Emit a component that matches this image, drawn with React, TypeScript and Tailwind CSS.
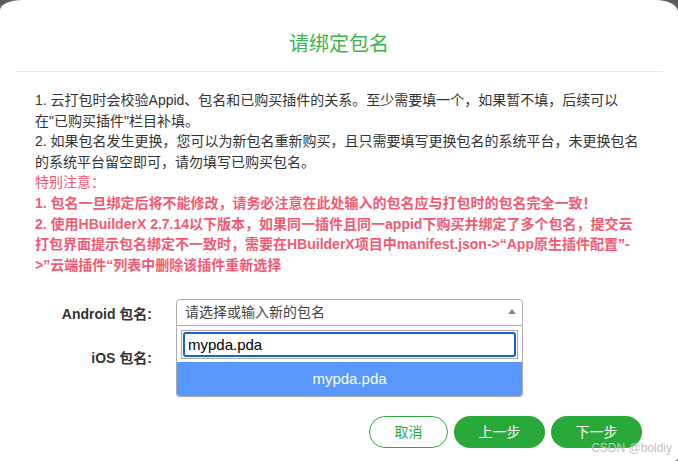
export default function App() {
  const font = "font-['Liberation_Sans','Noto_Sans_CJK_SC',sans-serif]";

  return (
    <div className={`relative h-[461px] w-[678px] overflow-hidden bg-[#5c5c5c] ${font}`}>
      <div className="flex h-full flex-col rounded-tl-[22px_10px] rounded-tr-[22px_12px] rounded-br-[4px] bg-white">
        {/* header */}
        <div className="mx-[15px] flex h-[72px] shrink-0 items-end justify-center border-b border-[#e8e8e8] pb-[14px]">
          <h1 className="text-[20px] leading-[26px] text-[#39b54a]">请绑定包名</h1>
        </div>

        {/* notice */}
        <div className="mt-[18px] pl-[35px] text-[14px] leading-[20.6px] text-[#333]">
          <p className="whitespace-nowrap">
            1. 云打包时会校验Appid、包名和已购买插件的关系。至少需要填一个，如果暂不填，后续可以
            <br />
            在"已购买插件"栏目补填。
          </p>
          <p className="whitespace-nowrap">
            2. 如果包名发生更换，您可以为新包名重新购买，且只需要填写更换包名的系统平台，未更换包名
            <br />
            的系统平台留空即可，请勿填写已购买包名。
          </p>
          <p className="text-[#f35a72]">特别注意：</p>
          <p className="whitespace-nowrap font-bold text-[#f35a72]">
            1. 包名一旦绑定后将不能修改，请务必注意在此处输入的包名应与打包时的包名完全一致！
          </p>
          <p className="whitespace-nowrap font-bold text-[#f35a72]">
            2. 使用HBuilderX 2.7.14以下版本，如果同一插件且同一appid下购买并绑定了多个包名，提交云
            <br />
            打包界面提示包名绑定不一致时，需要在HBuilderX项目中manifest.json-&gt;“App原生插件配置”-
            <br />
            &gt;”云端插件“列表中删除该插件重新选择
          </p>
        </div>

        {/* form */}
        <div className="mt-[24px] flex flex-col gap-[16px]">
          <div className="flex items-center">
            <label className="w-[152px] pt-[4px] text-right text-[14px] font-bold text-[#333]">Android 包名:</label>
            <div className="relative ml-[24px] w-[347px]">
              <div className="flex h-[27px] items-center justify-between rounded-t-[4px] border border-[#aaa] bg-white pl-[8px] pr-[6px]">
                <span className="text-[14px] text-[#444]">请选择或输入新的包名</span>
                <span className="mb-[2px] h-0 w-0 border-x-[4px] border-b-[5px] border-x-transparent border-b-[#888]" />
              </div>
              <div className="absolute left-0 top-[27px] z-10 w-full rounded-b-[4px] border border-t-0 border-[#aaa] bg-white">
                <div className="p-[4px] pb-[3px]">
                  <div className="border border-[#aaa] p-px">
                    <div className="flex h-[25px] items-center rounded-[3px] border-2 border-[#1a5fcf] px-[3px] text-[15px] text-black">
                      mypda.pda
                    </div>
                  </div>
                </div>
                <div className="flex h-[34px] items-center justify-center rounded-b-[3px] bg-[#5897fb] text-[15px] text-white">
                  mypda.pda
                </div>
              </div>
            </div>
          </div>
          <div className="flex h-[27px] items-center">
            <label className="w-[152px] pt-[6px] text-right text-[14px] font-bold text-[#333]">iOS 包名:</label>
          </div>
        </div>

        {/* footer */}
        <div className="mt-auto mb-[13px] flex justify-end gap-[6px] pr-[36px]">
          <button className="h-[32px] w-[79px] rounded-full border border-[#2aa93b] bg-white text-[14px] text-[#2aa93b]">
            取消
          </button>
          <button className="h-[32px] w-[91px] rounded-full bg-[#2aa93b] text-[14px] text-white">上一步</button>
          <button className="h-[32px] w-[91px] rounded-full bg-[#2aa93b] text-[14px] text-white">下一步</button>
        </div>
      </div>

      <span className="absolute bottom-[6px] right-[6px] text-[12px] leading-[14px] text-[#c4c4c4]">CSDN @boldiy</span>
    </div>
  );
}
